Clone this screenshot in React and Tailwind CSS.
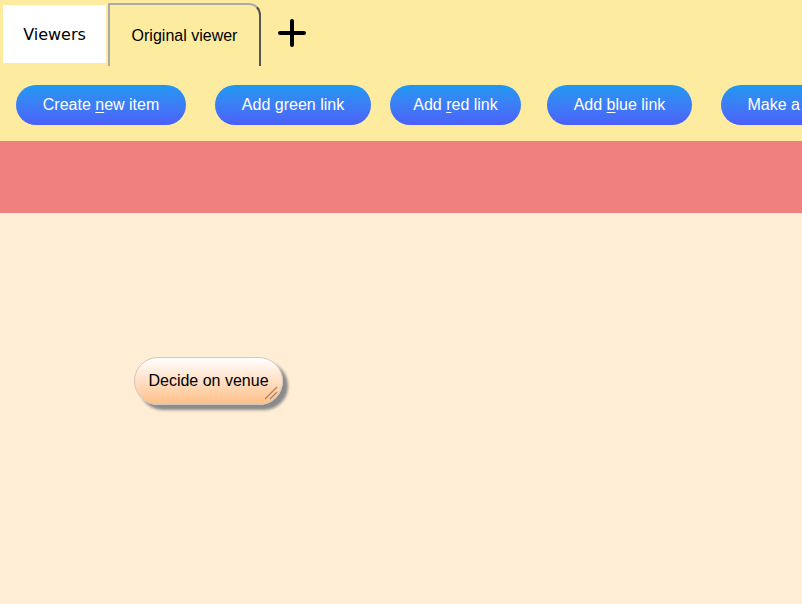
import { useState } from 'react'

const font = { fontFamily: '"Liberation Sans", Arial, sans-serif' }

// toolbar buttons: label split around the accelerator letter
const actions = [
  { pre: 'Create ', key: 'n', post: 'ew item', w: 'w-[170px]', ml: 'ml-[16px]' },
  { pre: 'Add green link', key: '', post: '', w: 'w-[156px]', ml: 'ml-[29px]' },
  { pre: 'Add ', key: 'r', post: 'ed link', w: 'w-[131px]', ml: 'ml-[19px]' },
  { pre: 'Add ', key: 'b', post: 'lue link', w: 'w-[145px]', ml: 'ml-[26px]' },
  { pre: 'Make a link', key: '', post: '', w: 'w-[134px]', ml: 'ml-[29px]' },
]

const ActionButton = ({ a }) => (
  <button
    className={`${a.w} ${a.ml} shrink-0 h-[40px] rounded-[20px] bg-gradient-to-b from-[#1e98f2] to-[#4b5ff9] text-white text-[16px] whitespace-nowrap`}
  >
    {a.pre}
    {a.key && <span className="underline underline-offset-2">{a.key}</span>}
    {a.post}
  </button>
)

const App = () => {
  const [tab, setTab] = useState('original')

  return (
    <div className="h-screen flex flex-col bg-[#ffeed5] overflow-hidden" style={font}>
      {/* Header: viewer tabs + toolbar */}
      <div className="bg-[#fdeca0]">
        <div className="h-[66px] flex items-start">
          <div className="ml-[3px] mt-[5px] w-[103px] h-[58px] pt-[2px] bg-white flex items-center justify-center text-[16px] text-black font-['DejaVu_Sans',sans-serif]">
            Viewers
          </div>
          <div
            onClick={() => setTab('original')}
            className="ml-[2px] mt-[3px] w-[153px] h-[63px] border-l-2 border-t-2 border-r-2 border-l-[#aaaaaa] border-t-[#aaaaaa] border-r-[#555555] rounded-tr-[12px] flex items-center justify-center text-[16px] text-black"
          >
            Original viewer
          </div>
          <button className="ml-[15px] mt-[17px] w-[32px] h-[32px] flex items-center justify-center">
            <svg width="30" height="30" viewBox="0 0 30 30">
              <path d="M15 3v24M3 15h24" stroke="#000" strokeWidth="4" strokeLinecap="round" />
            </svg>
          </button>
        </div>
        <div className="pt-[19px] pb-[16px] flex whitespace-nowrap overflow-hidden">
          {actions.map((a, i) => (
            <ActionButton key={i} a={a} />
          ))}
        </div>
      </div>

      <div className="h-[72px] bg-[#f08080]" />

      {/* Canvas with items */}
      <div className="relative flex-1">
        <div className="absolute left-[134px] top-[144px] w-[149px] h-[48px] rounded-[24px] border border-[#d0c8c0] bg-gradient-to-b from-white to-[#ffbf86] shadow-[5px_5px_3px_#8a8a8a] flex items-center justify-center text-[16px] text-black">
          Decide on venue
          <svg className="absolute right-[4px] bottom-[4px]" width="14" height="14" viewBox="0 0 14 14">
            <path d="M1 13L13 1M6 13L13 6" stroke="#b08060" strokeWidth="1.2" />
          </svg>
        </div>
      </div>
    </div>
  )
}

export default App
